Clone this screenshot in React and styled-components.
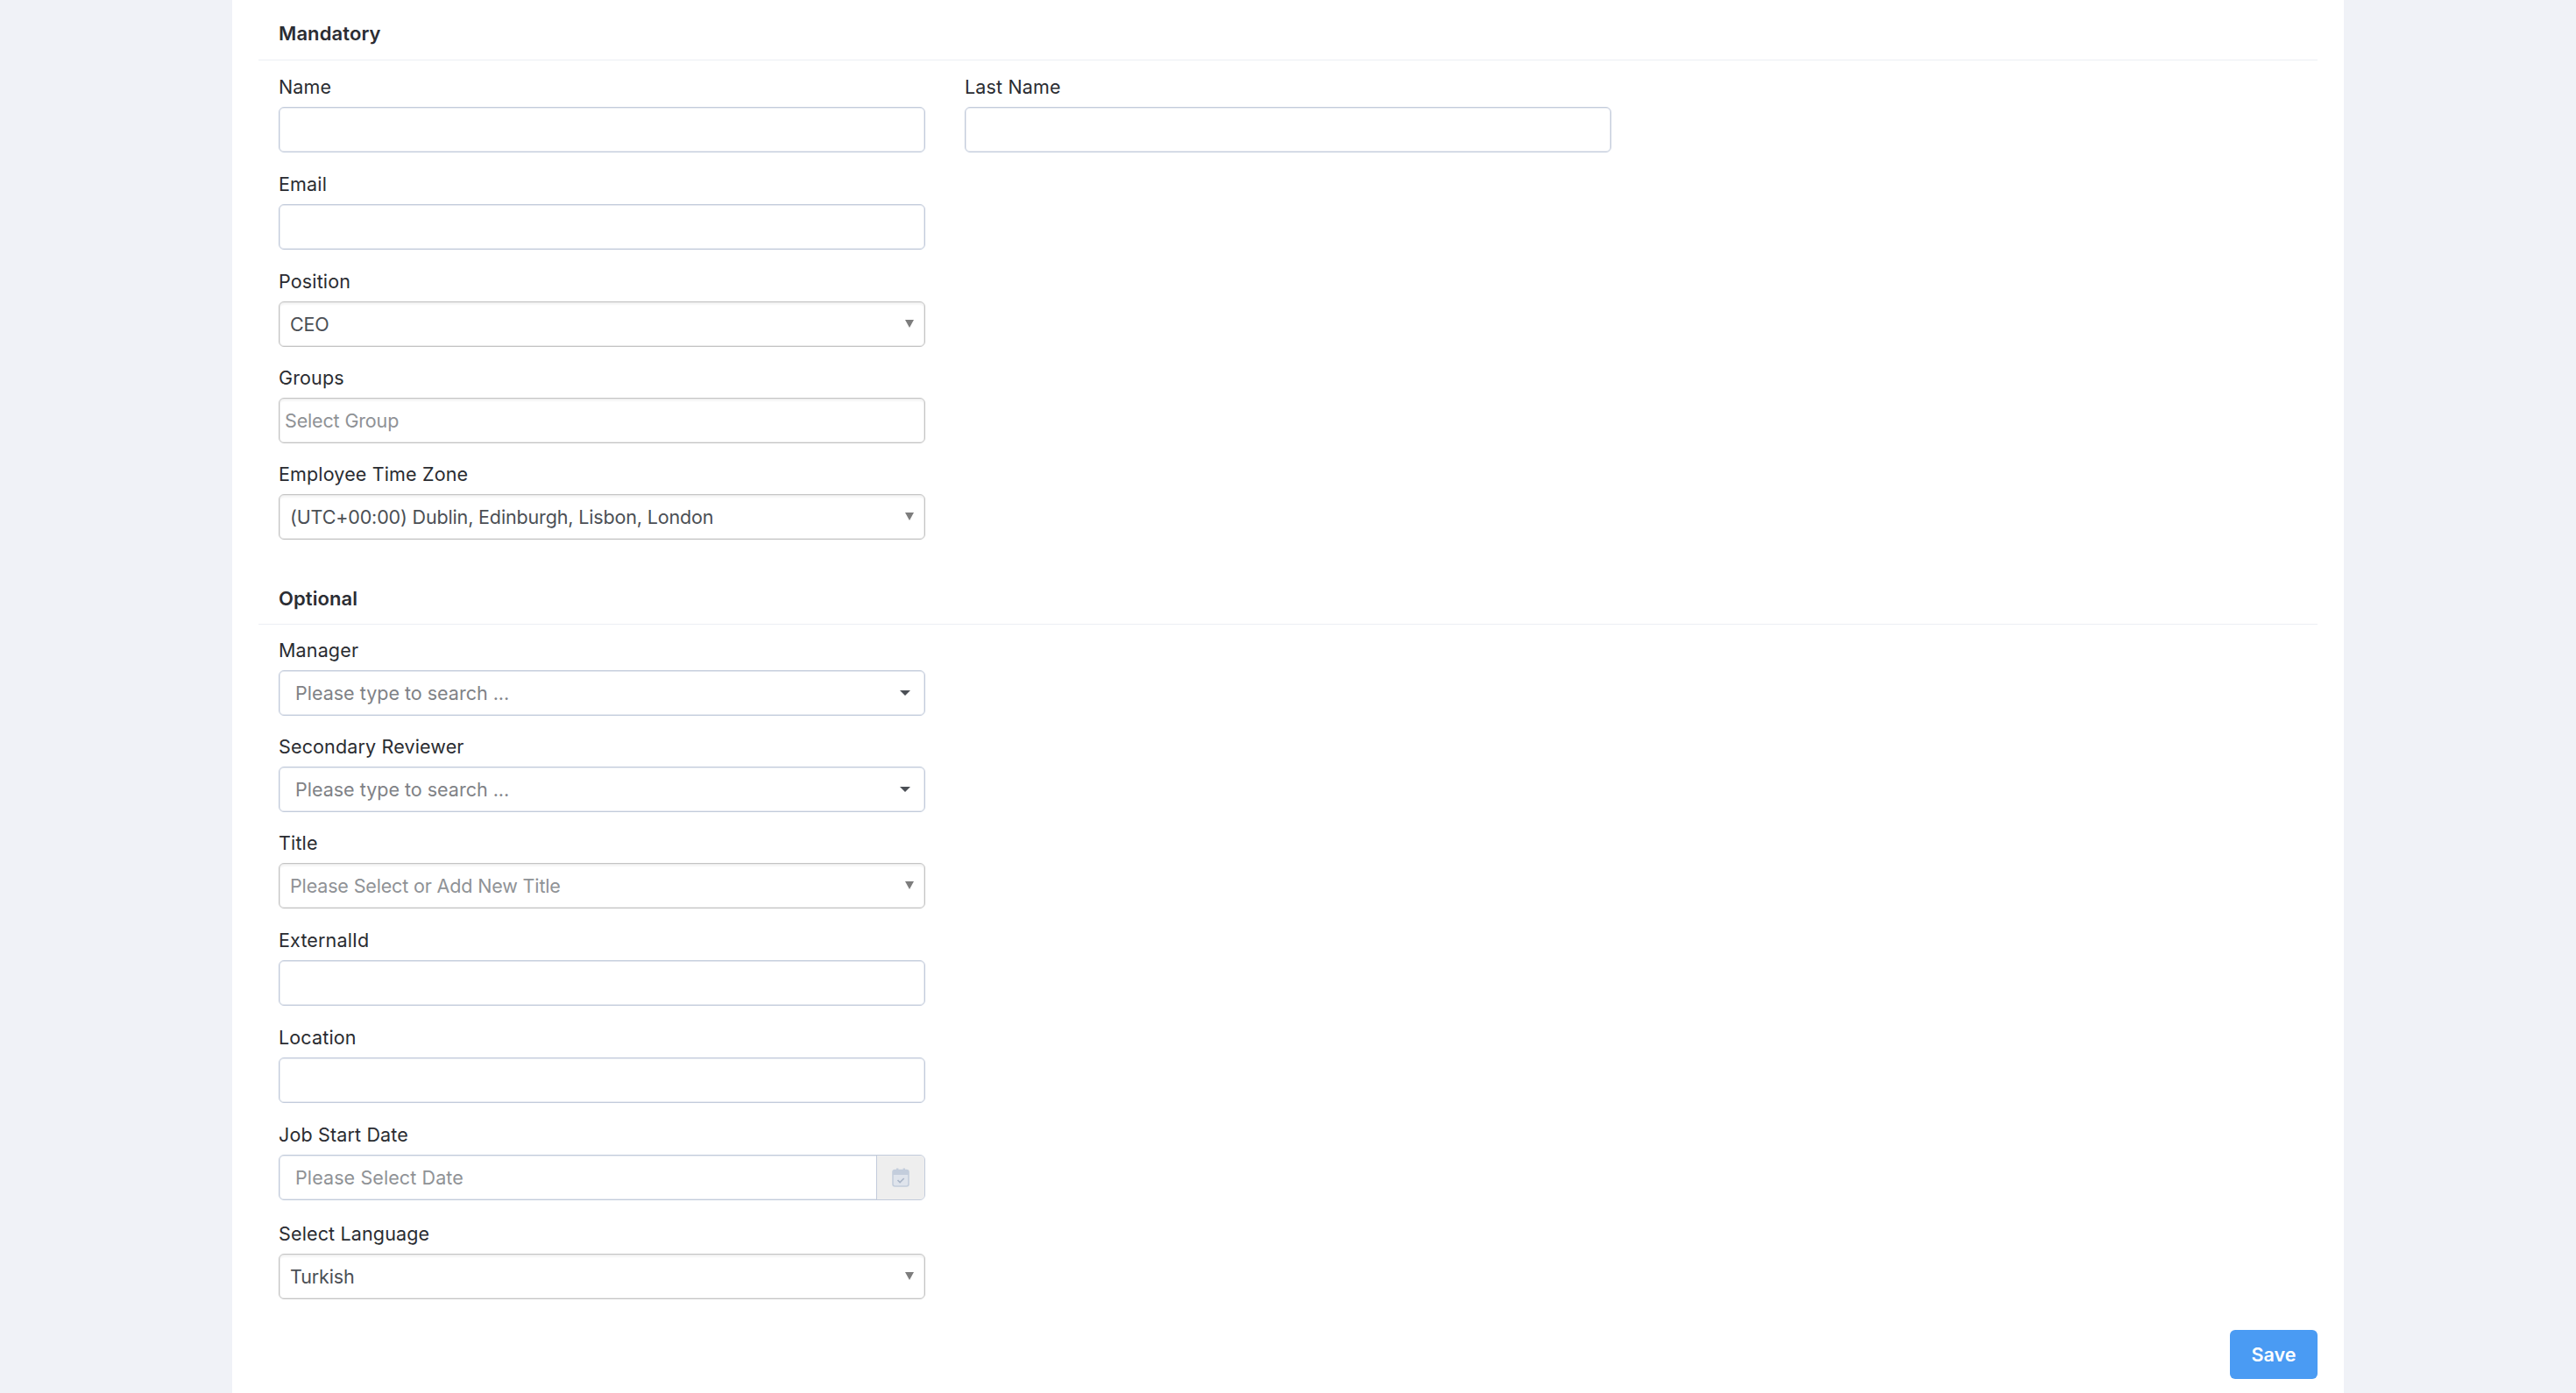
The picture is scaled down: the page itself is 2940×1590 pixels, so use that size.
import React from "react";
import styled, { createGlobalStyle } from "styled-components";

const GlobalStyle = createGlobalStyle`
  html, body {
    margin: 0;
    padding: 0;
    height: 1590px;
    overflow: hidden;
    background: #f0f2f7;
    font-family: "Inter", "Open Sans", sans-serif;
  }
  * { box-sizing: border-box; }
`;

const Page = styled.div`
  height: 1590px;
  padding: 0 265px;
  overflow: hidden;
`;

const Panel = styled.form`
  height: 1590px;
  background: #fff;
  padding: 0 30px;
`;

const SectionTitle = styled.div`
  height: ${(props) => props.height}px;
  padding: ${(props) => props.top}px 23px 0;
  border-bottom: 1px solid #eceff4;
  font-size: 22px;
  line-height: 30px;
  font-weight: 600;
  letter-spacing: 0.1px;
  color: #2b2d33;
`;

const Grid = styled.div`
  display: grid;
  grid-template-columns: repeat(3, 783px);
  padding-top: ${(props) => props.top}px;
`;

const Field = styled.div`
  padding: 0 22px 0 23px;
  height: ${(props) => props.height || 111}px;
`;

const Label = styled.label`
  display: block;
  height: 38px;
  font-size: 21.5px;
  line-height: 30px;
  letter-spacing: 0.15px;
  color: #2a2c31;
`;

const TextInput = styled.input`
  display: block;
  width: 100%;
  height: 52px;
  padding: 0 12px;
  border: 1px solid #c2cbdb;
  border-radius: 6px;
  box-shadow: inset 0 0 0 1px #e8ebf1;
  outline: none;
  background: #fff;
  font: inherit;
`;

const NativeSelect = styled.div`
  position: relative;
  display: flex;
  align-items: center;
  width: 100%;
  height: 52px;
  padding: 0 ${(props) => props.$pad ?? 12}px;
  border: 1px solid #c4c4c4;
  border-radius: 6px;
  box-shadow: inset 0 0 0 1px #ebebeb, inset 0 3px 2px rgba(0, 0, 0, 0.04);
  font-size: 21.5px;
  letter-spacing: -0.15px;
  color: ${(props) => (props.$muted ? "#8f9296" : "#4b4f55")};
`;

const SearchSelect = styled.div`
  position: relative;
  display: flex;
  align-items: center;
  width: 100%;
  height: 52px;
  padding: 0 18px;
  border: 1px solid #c2cbdb;
  border-radius: 6px;
  box-shadow: inset 0 0 0 1px #e8ebf1;
  font-size: 21.5px;
  letter-spacing: 0;
  color: #7f8286;
`;

const SelectCaret = styled.span`
  position: absolute;
  top: 50%;
  right: 12px;
  margin-top: -5px;
  border-style: solid;
  border-width: 9px 5.5px 0;
  border-color: #7d7d7d transparent transparent;
`;

const SearchCaret = styled.span`
  position: absolute;
  top: 50%;
  right: 16px;
  margin-top: -3px;
  border-style: solid;
  border-width: 6px 6px 0;
  border-color: #4b4f55 transparent transparent;
`;

const DateGroup = styled.div`
  display: flex;
  width: 100%;
  height: 52px;
  border: 1px solid #c2cbdb;
  border-radius: 6px;
  box-shadow: inset 0 0 0 1px #e8ebf1;
  overflow: hidden;
`;

const DateText = styled.div`
  flex: 1;
  display: flex;
  align-items: center;
  padding: 0 18px;
  font-size: 21.5px;
  letter-spacing: 0.1px;
  color: #8f9296;
`;

const DateAddon = styled.div`
  width: 55px;
  display: flex;
  align-items: center;
  justify-content: center;
  background: #eeeeee;
  border-left: 1px solid #c2cbdb;
`;

const Footer = styled.div`
  display: flex;
  justify-content: flex-end;
  padding-top: 35px;
`;

const SaveButton = styled.button`
  width: 100px;
  height: 56px;
  padding: 0;
  border: none;
  border-radius: 6px;
  background: #4a9bf3;
  color: #fff;
  font-family: inherit;
  font-size: 21.5px;
  font-weight: 600;
`;

const CalendarIcon = () => (
  <svg width="20" height="22" viewBox="0 0 20 22" fill="none">
    <path d="M5 0.5h2.4V4H5zM12.6 0.5H15V4h-2.4z" fill="#c3cddc" />
    <rect x="1" y="2.5" width="18" height="18.5" rx="2.5" fill="#dfe4ec" stroke="#c3cddc" strokeWidth="1.6" />
    <path d="M1 5a2.5 2.5 0 0 1 2.5-2.5h13A2.5 2.5 0 0 1 19 5v3H1z" fill="#c3cddc" />
    <path d="M6.5 14l2.6 2.6 4.6-4.6" stroke="#aab6c8" strokeWidth="1.6" />
  </svg>
);

const App = () => (
  <Page>
    <GlobalStyle />
    <Panel>
      <SectionTitle height={69} top={23}>Mandatory</SectionTitle>
      <Grid top={15}>
        <Field>
          <Label>Name</Label>
          <TextInput />
        </Field>
        <Field>
          <Label>Last Name</Label>
          <TextInput />
        </Field>
      </Grid>
      <Grid>
        <Field>
          <Label>Email</Label>
          <TextInput />
        </Field>
      </Grid>
      <Grid>
        <Field height={110}>
          <Label>Position</Label>
          <NativeSelect>
            CEO
            <SelectCaret />
          </NativeSelect>
        </Field>
      </Grid>
      <Grid>
        <Field height={110}>
          <Label>Groups</Label>
          <NativeSelect $pad={6} $muted>
            Select Group
          </NativeSelect>
        </Field>
      </Grid>
      <Grid>
        <Field height={88}>
          <Label>Employee Time Zone</Label>
          <NativeSelect>
            (UTC+00:00) Dublin, Edinburgh, Lisbon, London
            <SelectCaret />
          </NativeSelect>
        </Field>
      </Grid>
      <SectionTitle height={99} top={54}>Optional</SectionTitle>
      <Grid top={14}>
        <Field height={110}>
          <Label>Manager</Label>
          <SearchSelect>
            Please type to search ...
            <SearchCaret />
          </SearchSelect>
        </Field>
      </Grid>
      <Grid>
        <Field height={110}>
          <Label>Secondary Reviewer</Label>
          <SearchSelect>
            Please type to search ...
            <SearchCaret />
          </SearchSelect>
        </Field>
      </Grid>
      <Grid>
        <Field>
          <Label>Title</Label>
          <NativeSelect $muted>
            Please Select or Add New Title
            <SelectCaret />
          </NativeSelect>
        </Field>
      </Grid>
      <Grid>
        <Field>
          <Label>ExternalId</Label>
          <TextInput />
        </Field>
      </Grid>
      <Grid>
        <Field>
          <Label>Location</Label>
          <TextInput />
        </Field>
      </Grid>
      <Grid>
        <Field height={113}>
          <Label>Job Start Date</Label>
          <DateGroup>
            <DateText>Please Select Date</DateText>
            <DateAddon>
              <CalendarIcon />
            </DateAddon>
          </DateGroup>
        </Field>
      </Grid>
      <Grid>
        <Field height={90}>
          <Label>Select Language</Label>
          <NativeSelect>
            Turkish
            <SelectCaret />
          </NativeSelect>
        </Field>
      </Grid>
      <Footer>
        <SaveButton type="button">Save</SaveButton>
      </Footer>
    </Panel>
  </Page>
);

export default App;
